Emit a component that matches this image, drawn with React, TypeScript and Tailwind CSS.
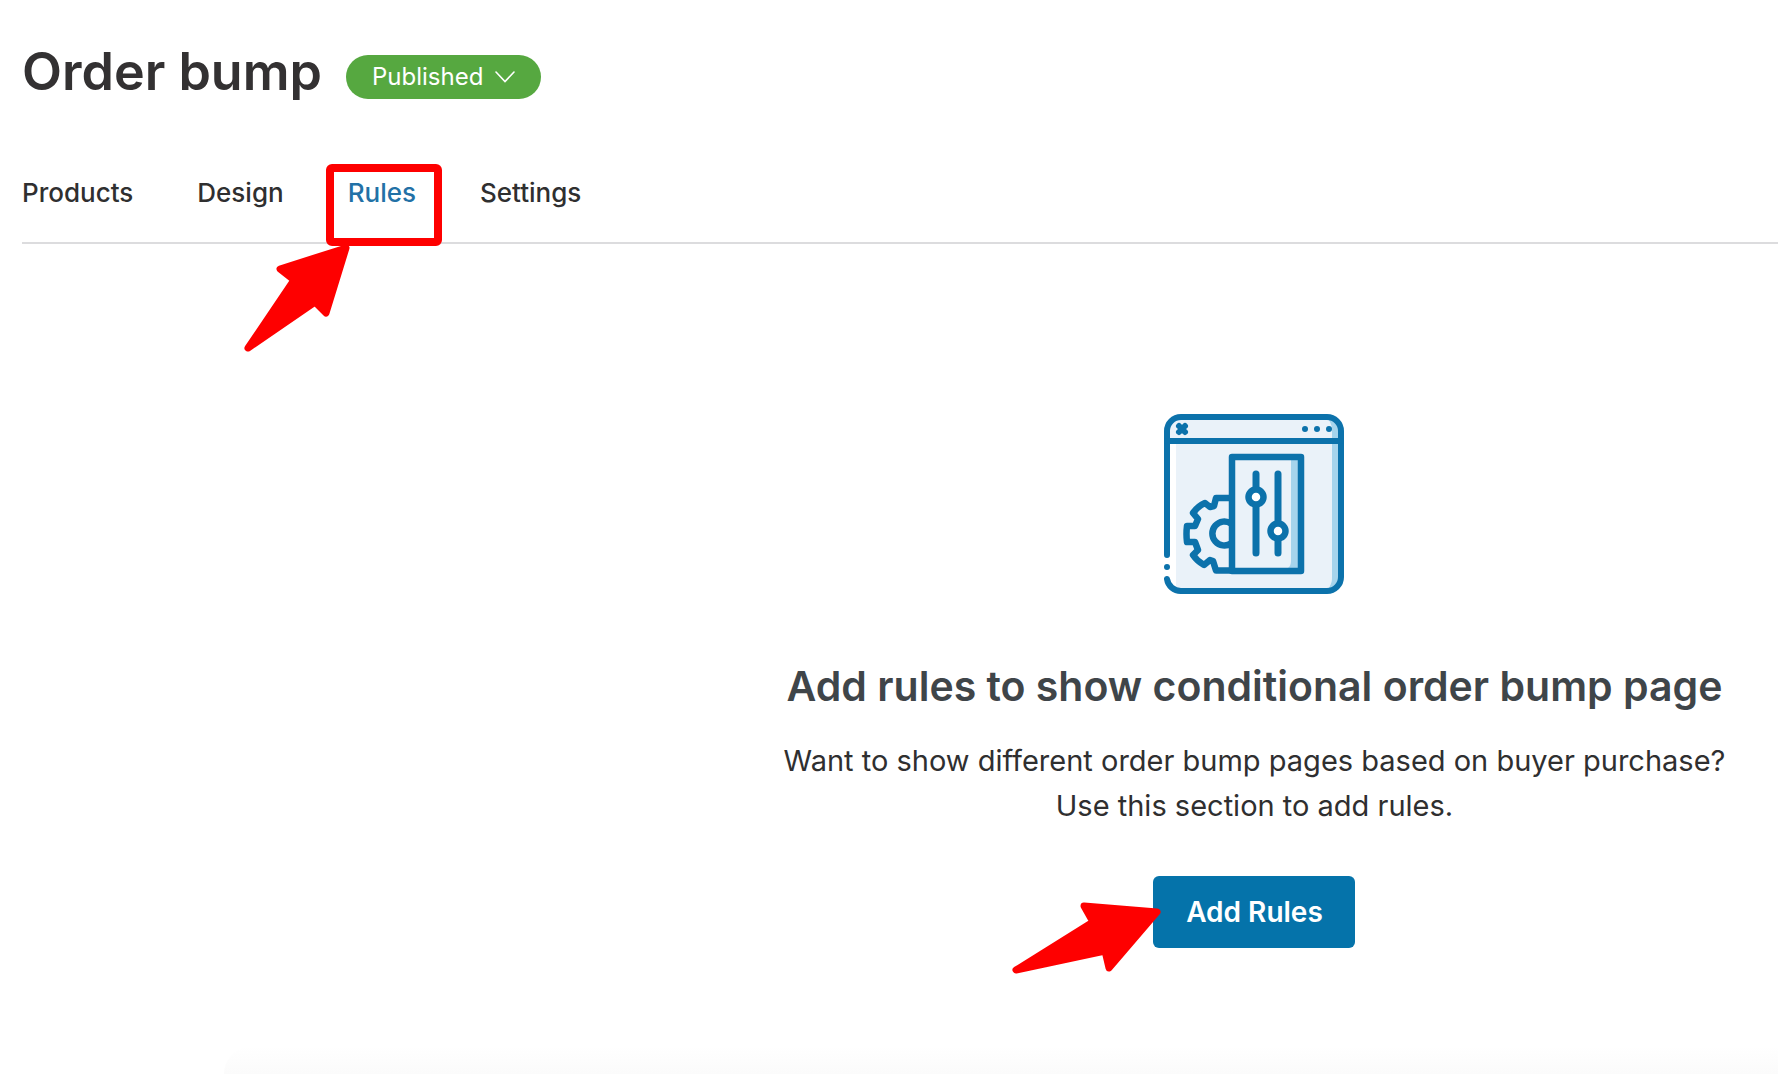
const tabs = [
  { label: "Products", active: false },
  { label: "Design", active: false },
  { label: "Rules", active: true },
  { label: "Settings", active: false },
];

function RulesIcon() {
  return (
    <svg viewBox="0 0 180 180" className="size-[180px]" fill="none" aria-hidden="true">
      <path d="M3 27H12V177H3z" fill="#fff" />
      <path d="M12 3h144c8 0 12 6 12 14v146c0 8-4 14-12 14H12z" fill="#eaf2f9" />
      <path d="M12 3h8v24H3V17C3 9 6 3 12 3z" fill="#eaf2f9" />
      <path d="M162 3c8 0 15 6 15 14v146c0 8-7 14-15 14 4-4 6-8 6-14V17c0-6-2-10-6-14z" fill="#a6d4ec" />
      <g stroke="#0c72ab" strokeWidth="6" strokeLinecap="round" strokeLinejoin="round">
        <path d="M3 141V17A14 14 0 0 1 17 3H163A14 14 0 0 1 177 17V163A14 14 0 0 1 163 177H17A14 14 0 0 1 3 165" />
        <path d="M3 27H177" />
        <path
          strokeWidth="6.500"
          d="M67 84H52L50 92L46 93L41 89Q34 92 29 99L34 105L31 112H23Q22 120 23 128H31L34 136L29 141Q33 147 40 151L46 146L49 147L52 156.500H67"
        />
        <path strokeWidth="6.500" d="M67 109.500A12 12 0 1 0 67 129.500" />
      </g>
      <rect x="68" y="43" width="69" height="114" fill="#eaf2f9" />
      <path d="M127 46h8v108h-11q3-2 3-7z" fill="#a6d4ec" />
      <rect x="68" y="43" width="69" height="114" stroke="#0c72ab" strokeWidth="6.500" strokeLinejoin="round" />
      <path d="M92 60V139M114 60V139" stroke="#0c72ab" strokeWidth="7" strokeLinecap="round" />
      <g stroke="#0c72ab" strokeWidth="6.500" fill="#fff">
        <circle cx="92" cy="83" r="7.500" />
        <circle cx="114" cy="117" r="7.500" />
      </g>
      <g fill="#0c72ab">
        <circle cx="3" cy="153" r="3" />
        <circle cx="141" cy="15" r="3" />
        <circle cx="153" cy="15" r="3" />
        <circle cx="165" cy="15" r="3" />
      </g>
      <path d="M15 12L21 18M21 12L15 18" stroke="#0c72ab" strokeWidth="6" strokeLinecap="round" />
    </svg>
  );
}

export default function App() {
  return (
    <div className="flex min-h-screen flex-col overflow-x-hidden bg-white font-['Inter',sans-serif] text-[#2f2f30]">
      <header className="flex items-center gap-6 pt-9 pl-[22px]">
        <h1 className="text-[52px] leading-[72px] font-semibold text-[#333132]">Order bump</h1>
        <button
          type="button"
          className="mt-2.5 flex h-11 items-center gap-3 rounded-full bg-[#56a840] px-[26px] text-[24px] text-white"
        >
          Published
          <svg viewBox="0 0 20 12" className="h-3 w-5" fill="none" aria-hidden="true">
            <path d="M1 1L10 10.500L19 1" stroke="currentColor" strokeWidth="1.600" strokeLinecap="round" />
          </svg>
        </button>
      </header>

      <nav className="mt-14 ml-[22px] flex h-20 gap-16 border-b-2 border-[#dcdcde] text-[26px] leading-[58px] font-medium">
        {tabs.map((tab) => (
          <div key={tab.label} className="relative">
            <a href="#" className={tab.active ? "text-[#2271a6]" : ""}>
              {tab.label}
            </a>
            {tab.active && (
              <>
                <span className="absolute top-0 -left-[22px] h-[82px] w-[116px] rounded-md border-[8px] border-[#fe0000]" />
                <svg viewBox="0 0 110 110" className="absolute top-20 -left-[106px] size-[110px]" aria-hidden="true">
                  <path
                    d="M104 4L38 25L52 36L6 104L73 58L84 69Z"
                    fill="#fe0000"
                    stroke="#fe0000"
                    strokeWidth="7"
                    strokeLinejoin="round"
                  />
                </svg>
              </>
            )}
          </div>
        ))}
      </nav>

      <main className="ml-0.5 flex flex-col items-center pt-[170px] pl-[41vw] text-center">
        <RulesIcon />
        <h2 className="mt-16 text-[41px] leading-14 font-semibold whitespace-nowrap text-[#3f4549]">
          Add rules to show conditional order bump page
        </h2>
        <p className="mt-6 text-[29px] leading-[45px] whitespace-nowrap">
          Want to show different order bump pages based on buyer purchase?
          <br />
          Use this section to add rules.
        </p>
        <div className="relative mt-12">
          <button type="button" className="h-[72px] w-[202px] rounded-md bg-[#0573aa] text-[28px] font-semibold text-white">
            Add Rules
          </button>
          <svg viewBox="0 0 160 80" className="absolute top-6 -left-36 h-20 w-40" aria-hidden="true">
            <path
              d="M148 12L75 6L84 22L7 70L96 51L100 68Z"
              fill="#fe0000"
              stroke="#fe0000"
              strokeWidth="7"
              strokeLinejoin="round"
            />
          </svg>
        </div>
      </main>

      <div className="mt-auto ml-56 h-7 rounded-tl-full bg-linear-to-b from-white to-[#fbfbfb]" />
    </div>
  );
}
